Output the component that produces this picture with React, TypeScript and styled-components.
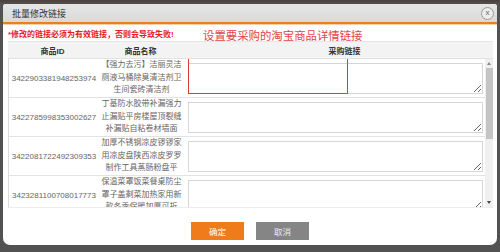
import styled, { createGlobalStyle } from "styled-components";

const GlobalStyle = createGlobalStyle`
  html, body {
    margin: 0;
    padding: 0;
    background: #525252;
    font-family: "Liberation Sans", "Noto Sans CJK SC", sans-serif;
  }
`;

type Item = { id: string; name: string[]; highlight?: boolean };

const items: Item[] = [
  { id: "3422903381948253974", name: ["【强力去污】洁丽灵洁", "厕液马桶除臭清洁剂卫", "生间瓷砖清洁剂"], highlight: true },
  { id: "3422785998353002627", name: ["丁基防水胶带补漏强力", "止漏贴平房楼屋顶裂缝", "补漏贴自粘卷材墙面"] },
  { id: "3422081722492309353", name: ["加厚不锈钢凉皮锣锣家", "用凉皮盘陕西凉皮罗罗", "制作工具蒸肠粉盘平"] },
  { id: "3423281100708017773", name: ["保温菜罩饭菜餐桌防尘", "罩子盖剩菜加热家用新", "款冬季保暖加厚可折"] },
];

const Page = styled.div`
  padding: 4px 3px 7px 3px;
  background: linear-gradient(#4a3f3c 0, #525252 4px);
`;

const Dialog = styled.div`
  height: 241px;
  background: #fff;
  border-radius: 3px 3px 7px 7px;
  display: flex;
  flex-direction: column;
  overflow: hidden;
`;

const TitleBar = styled.div`
  height: 18px;
  flex: none;
  display: flex;
  align-items: center;
  justify-content: space-between;
  padding: 0 3px 0 9px;
  background: linear-gradient(#e6e6e6, #d9d9d9);
  border-bottom: 2px solid #e8801f;
  box-shadow: 0 1px 0 #f7cfa6;
`;

const Title = styled.span`
  font-size: 9px;
  color: #333;
`;

const CloseButton = styled.span`
  width: 11px;
  height: 11px;
  border: 1px solid #9a9a9a;
  border-radius: 50%;
  display: flex;
  align-items: center;
  justify-content: center;
  font-size: 8px;
  line-height: 1;
  color: #666;
  background: #ececec;
`;

const Content = styled.div`
  padding: 0 4px 0 5px;
  display: flex;
  flex-direction: column;
`;

const WarnRow = styled.div`
  height: 16px;
  margin-top: 1px;
  display: flex;
  align-items: center;
`;

const Warning = styled.span`
  font-size: 8px;
  font-weight: bold;
  color: #e41d1d;
  width: 195px;
`;

const Annotation = styled.span`
  font-size: 11.4px;
  color: #e24545;
  margin-top: 3px;
`;

const Grid = `
  display: grid;
  grid-template-columns: 89px 87px 1fr;
`;

const HeaderRow = styled.div`
  ${Grid};
  height: 16px;
  align-items: center;
  background: #f3f3f3;
  border-top: 1px solid #e6e6e6;
  border-bottom: 1px solid #e2e2e2;
`;

const HeaderCell = styled.div`
  font-size: 8px;
  font-weight: bold;
  color: #333;
  text-align: center;
`;

const LinkHeader = styled(HeaderCell)`
  padding-left: 12px;
`;

const ScrollBox = styled.div`
  height: 148px;
  display: flex;
  border-left: 1px solid #dcdcdc;
  border-bottom: 1px solid #ececec;
`;

const Rows = styled.div`
  flex: 1;
  overflow: hidden;
`;

const Row = styled.div`
  ${Grid};
  height: 39px;
  align-items: center;
  border-bottom: 1px solid #e3e3e3;
  box-sizing: border-box;
`;

const IdCell = styled.div`
  font-size: 8px;
  color: #666;
  text-align: center;
  padding-left: 1px;
`;

const NameCell = styled.div`
  font-size: 8px;
  line-height: 12.5px;
  color: #666;
  text-align: center;
  white-space: nowrap;
`;

const LinkCell = styled.div`
  position: relative;
  height: 100%;
  display: flex;
  align-items: center;
  padding: 0 2px 0 3px;
`;

const LinkInput = styled.textarea`
  width: 100%;
  height: 31px;
  box-sizing: border-box;
  margin: 0;
  border: 1px solid #d6d6d6;
  border-radius: 0;
  background: #fff;
  resize: vertical;
  font-size: 8px;
  font-family: inherit;
  outline: none;
`;

const HighlightBox = styled.div`
  position: absolute;
  left: 3px;
  top: -1px;
  width: 160px;
  height: 36px;
  box-sizing: border-box;
  border: 1.5px solid #d24040;
  pointer-events: none;
`;

const ScrollTrack = styled.div`
  width: 8px;
  flex: none;
  background: #f0f0f0;
  display: flex;
  flex-direction: column;
  align-items: center;
`;

const Arrow = styled.div<{ $up?: boolean }>`
  height: 9px;
  width: 8px;
  display: flex;
  align-items: center;
  justify-content: center;
  &::after {
    content: "";
    border-left: 2.5px solid transparent;
    border-right: 2.5px solid transparent;
    ${(p) => (p.$up ? "border-bottom: 3px solid #888;" : "border-top: 3px solid #444;")}
  }
`;

const Thumb = styled.div`
  width: 7px;
  height: 71px;
  background: #c4c4c4;
`;

const Spacer = styled.div`
  flex: 1;
`;

const Footer = styled.div`
  display: flex;
  justify-content: center;
  gap: 12px;
  padding-top: 14px;
`;

const Button = styled.button<{ $variant: "primary" | "muted" }>`
  width: 53px;
  height: 18px;
  border: none;
  padding: 0;
  font-size: 8.5px;
  font-family: inherit;
  color: ${(p) => (p.$variant === "primary" ? "#fff" : "#eee")};
  background: ${(p) => (p.$variant === "primary" ? "#f07b1b" : "#858585")};
`;

export default function App() {
  return (
    <Page>
      <GlobalStyle />
      <Dialog>
        <TitleBar>
          <Title>批量修改链接</Title>
          <CloseButton>x</CloseButton>
        </TitleBar>
        <Content>
          <WarnRow>
            <Warning>*修改的链接必须为有效链接，否则会导致失败!</Warning>
            <Annotation>设置要采购的淘宝商品详情链接</Annotation>
          </WarnRow>
          <HeaderRow>
            <HeaderCell>商品ID</HeaderCell>
            <HeaderCell>商品名称</HeaderCell>
            <LinkHeader>采购链接</LinkHeader>
          </HeaderRow>
          <ScrollBox>
            <Rows>
              {items.map((item) => (
                <Row key={item.id}>
                  <IdCell>{item.id}</IdCell>
                  <NameCell>
                    {item.name.map((line) => (
                      <div key={line}>{line}</div>
                    ))}
                  </NameCell>
                  <LinkCell>
                    <LinkInput />
                    {item.highlight && <HighlightBox />}
                  </LinkCell>
                </Row>
              ))}
            </Rows>
            <ScrollTrack>
              <Arrow $up />
              <Thumb />
              <Spacer />
              <Arrow />
            </ScrollTrack>
          </ScrollBox>
        </Content>
        <Footer>
          <Button $variant="primary">确定</Button>
          <Button $variant="muted">取消</Button>
        </Footer>
      </Dialog>
    </Page>
  );
}
